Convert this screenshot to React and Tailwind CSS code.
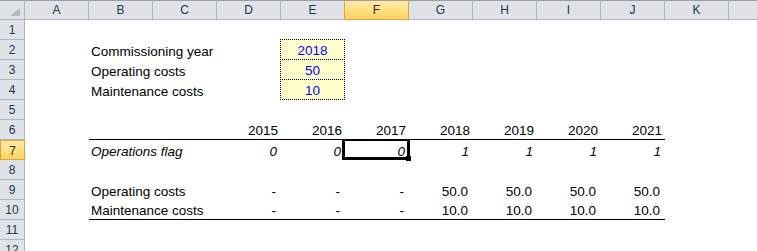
const COLS = ['A', 'B', 'C', 'D', 'E', 'F', 'G', 'H', 'I', 'J', 'K', 'L'];
const YEAR_COLS = ['D', 'E', 'F', 'G', 'H', 'I', 'J'];
const LINE_COLS = ['B', 'C', 'D', 'E', 'F', 'G', 'H', 'I', 'J'];

// cell kinds -> full class strings
const KIND = {
  label: 'justify-start pl-[2px]',
  italicLabel: 'justify-start pl-[2px] italic',
  year: 'justify-end pr-[3px]',
  flag: 'justify-end pr-[4px] italic',
  dash: 'justify-end pr-[5px]',
  money: 'justify-end pr-[5px]',
  input:
    'justify-center -mt-px -ml-px h-[21px] w-[65px] bg-[#ffffcc] border border-dotted border-black text-[#0000ff]',
};

function buildRows() {
  const rows = {};
  for (let r = 1; r <= 12; r++) rows[r] = {};

  rows[2].B = { text: 'Commissioning year', kind: 'label' };
  rows[2].E = { text: '2018', kind: 'input' };
  rows[3].B = { text: 'Operating costs', kind: 'label' };
  rows[3].E = { text: '50', kind: 'input' };
  rows[4].B = { text: 'Maintenance costs', kind: 'label' };
  rows[4].E = { text: '10', kind: 'input' };

  YEAR_COLS.forEach((c, i) => {
    const year = 2015 + i;
    const on = year >= 2018;
    rows[6][c] = { text: String(year), kind: 'year' };
    rows[7][c] = { text: on ? '1' : '0', kind: 'flag', active: c === 'F' };
    rows[9][c] = on ? { text: '50.0', kind: 'money' } : { text: '-', kind: 'dash' };
    rows[10][c] = on ? { text: '10.0', kind: 'money' } : { text: '-', kind: 'dash' };
  });

  rows[7].B = { text: 'Operations flag', kind: 'italicLabel' };
  rows[9].B = { text: 'Operating costs', kind: 'label' };
  rows[10].B = { text: 'Maintenance costs', kind: 'label' };

  return rows;
}

function Cell({ cell, underline }) {
  const base = 'relative h-[20px] flex items-end leading-[16px] whitespace-nowrap';
  const line = underline ? 'border-b border-black' : '';
  if (!cell) return <div className={`${base} ${line}`} />;
  return (
    <div className={`${base} ${KIND[cell.kind]} ${line}`}>
      <span>{cell.text}</span>
      {cell.active && (
        // active cell cursor
        <div className="absolute left-[-3px] top-[-1px] w-[68px] h-[21px] border-[3px] border-t-2 border-black z-10 pointer-events-none">
          <div className="absolute right-[-4px] bottom-[-4px] w-[5px] h-[5px] bg-black" />
        </div>
      )}
    </div>
  );
}

export default function App() {
  const rows = buildRows();

  return (
    <div className="w-[757px] h-[251px] overflow-hidden bg-white text-black font-['Liberation_Sans',Arial,sans-serif] text-[13.5px]">
      <div className="grid grid-cols-[25px_repeat(12,64px)]">
        {/* corner */}
        <div className="h-[20px] flex items-end justify-end pr-[4px] pb-[3px] bg-[#dfe3e8] border-t border-[#9a9ea3] border-b border-r border-b-[#b1b6bc] border-r-[#b1b6bc]">
          <svg width="10" height="8" viewBox="0 0 10 8">
            <polygon points="10,0 10,8 0,8" fill="#b4b9bf" />
          </svg>
        </div>

        {/* column headers */}
        {COLS.map((c) =>
          c === 'F' ? (
            <div
              key={c}
              className="-ml-px w-[65px] h-[20px] text-center text-[12px] leading-[17px] pt-[1px] text-[#3b2a10] bg-linear-to-b from-[#ffeaa3] to-[#fcd35f] border-t border-t-[#9a9ea3] border-x border-b border-[#e1a33d]"
            >
              {c}
            </div>
          ) : (
            <div
              key={c}
              className="h-[20px] text-center text-[12px] leading-[17px] pt-[1px] text-[#26364a] bg-[#dfe3e8] border-t border-t-[#9a9ea3] border-b border-r border-b-[#b1b6bc] border-r-[#b1b6bc]"
            >
              {c}
            </div>
          )
        )}

        {/* rows */}
        {Object.keys(rows).map((r) => {
          const row = rows[r];
          const n = Number(r);
          const underline = n === 6 || n === 10;
          return [
            n === 7 ? (
              <div
                key={`h${r}`}
                className="h-[20px] text-center text-[12px] leading-[16px] pt-[2px] text-[#3b2a10] bg-linear-to-b from-[#ffeaa3] to-[#fcd35f] border border-[#e1a33d]"
              >
                {r}
              </div>
            ) : (
              <div
                key={`h${r}`}
                className="h-[20px] text-center text-[12px] leading-[16px] pt-[2px] text-[#26364a] bg-[#dfe3e8] border-b border-r border-[#b1b6bc]"
              >
                {r}
              </div>
            ),
            ...COLS.map((c) => (
              <Cell
                key={`${r}${c}`}
                cell={row[c]}
                underline={underline && LINE_COLS.includes(c)}
              />
            )),
          ];
        })}
      </div>
    </div>
  );
}
